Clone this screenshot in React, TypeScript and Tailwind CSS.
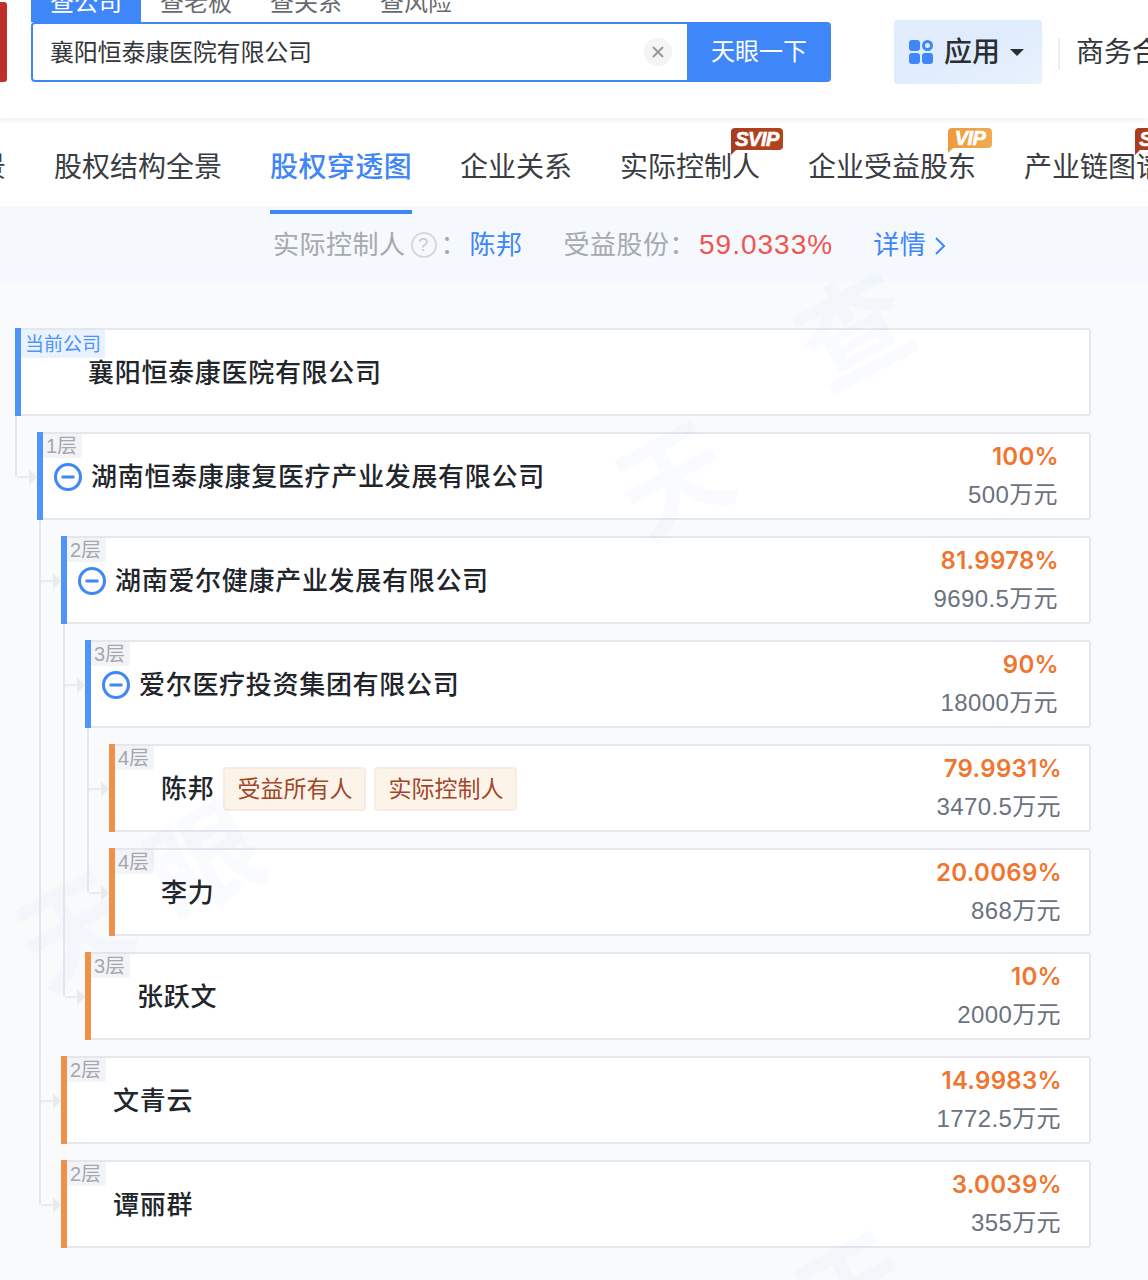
const tabs = [
  { label: '企业图景' },
  { label: '股权结构全景' },
  { label: '股权穿透图', active: true },
  { label: '企业关系' },
  { label: '实际控制人', badge: 'SVIP' },
  { label: '企业受益股东', badge: 'VIP' },
  { label: '产业链图谱', badge: 'SVIP' },
];

const rows = [
  { tag: '1层', name: '湖南恒泰康康复医疗产业发展有限公司', percent: '100%', amount: '500万元', ml: 'ml-[22px]', company: true, pr: 'pr-[31px]' },
  { tag: '2层', name: '湖南爱尔健康产业发展有限公司', percent: '81.9978%', amount: '9690.5万元', ml: 'ml-[46px]', company: true, pr: 'pr-[31px]' },
  { tag: '3层', name: '爱尔医疗投资集团有限公司', percent: '90%', amount: '18000万元', ml: 'ml-[70px]', company: true, pr: 'pr-[31px]' },
  { tag: '4层', name: '陈邦', percent: '79.9931%', amount: '3470.5万元', ml: 'ml-[94px]', owner: true },
  { tag: '4层', name: '李力', percent: '20.0069%', amount: '868万元', ml: 'ml-[94px]' },
  { tag: '3层', name: '张跃文', percent: '10%', amount: '2000万元', ml: 'ml-[70px]' },
  { tag: '2层', name: '文青云', percent: '14.9983%', amount: '1772.5万元', ml: 'ml-[46px]' },
  { tag: '2层', name: '谭丽群', percent: '3.0039%', amount: '355万元', ml: 'ml-[46px]' },
];

function MinusIcon() {
  return (
    <svg width="28" height="28" viewBox="0 0 28 28" className="shrink-0" fill="none" stroke="#3f86f8">
      <circle cx="14" cy="14" r="12.5" strokeWidth="3" />
      <path d="M7.5 14h13" strokeWidth="3" />
    </svg>
  );
}

function Tag({ children }: { children: string }) {
  return (
    <span className="h-[44px] px-[12px] flex items-center rounded-[4px] border-2 border-[#f9ecdf] bg-[#fdf4e9] text-[#a2462a] text-[23px]">
      {children}
    </span>
  );
}

function Badge({ type }: { type: string }) {
  const svip = type === 'SVIP';
  return (
    <span
      className={`absolute top-[-20px] flex items-center justify-center rounded-[4px] rounded-bl-none italic font-bold text-white text-[20px] leading-none tracking-[-0.5px] [-webkit-text-stroke:0.6px_white] ${
        svip
          ? 'left-[111px] w-[52px] h-[22px] bg-gradient-to-r from-[#a83c1d] to-[#b3441f]'
          : 'left-[140px] w-[44px] h-[20px] bg-gradient-to-r from-[#ee9a3c] to-[#f0ab55]'
      }`}
    >
      {type}
      <span
        className={`absolute left-0 top-full border-t-[5px] border-r-[5px] border-r-transparent ${
          svip ? 'border-t-[#a83c1d]' : 'border-t-[#ee9a3c]'
        }`}
      />
    </span>
  );
}

function TreeRow({ row }: { row: (typeof rows)[number] }) {
  const accent = row.company ? 'bg-[#4f94fb]' : 'bg-[#f0914a]';
  return (
    <div className={`relative h-[88px] flex items-center bg-white border-2 border-l-0 border-[#e4e7ee] rounded-r-[3px] ${row.ml} ${row.pr ?? 'pr-[28px]'}`}>
      {/* connector */}
      <div className="absolute left-[-20px] top-[42px] w-[12px] h-[2px] bg-[#e9ebf0]" />
      <div className="absolute left-[-8px] top-[35px] border-y-[8px] border-y-transparent border-l-[8px] border-l-[#e9ebf0]" />
      <div className={`w-[6px] h-[88px] shrink-0 ${accent}`} />
      <span className="absolute left-[6px] top-0 h-[24px] pl-[3px] pr-[5px] flex items-center bg-[#f3f4f6] rounded-br-[3px] text-[20px] text-[#a3a7af]">
        {row.tag}
      </span>
      <div className={`flex-1 flex items-center text-[26px] font-medium text-[#22252a] tracking-[0.7px] pt-[2px] ${row.company ? 'pl-[11px] gap-[9px]' : 'pl-[46px] gap-[9px]'}`}>
        {row.company && <MinusIcon />}
        <span>{row.name}</span>
        {row.owner && (
          <span className="flex gap-[8px] font-normal tracking-normal">
            <Tag>受益所有人</Tag>
            <Tag>实际控制人</Tag>
          </span>
        )}
      </div>
      <div className="flex flex-col items-end">
        <span className="h-[38px] text-[24px] leading-[38px] font-semibold text-[#f0752f] font-[Inter] tracking-[0.3px] mr-[-1px]">{row.percent}</span>
        <span className="h-[38px] text-[24px] leading-[38px] text-[#6b7280] tracking-[0.4px]">{row.amount}</span>
      </div>
    </div>
  );
}

export default function App() {
  return (
    <div className="relative w-[1148px] h-[1280px] overflow-hidden bg-[#f9fafc] font-['Liberation_Sans','Noto_Sans_CJK_SC',sans-serif]">
      {/* Top bar */}
      <header className="relative z-10 h-[118px] bg-white flex items-start shadow-[0_2px_6px_rgba(0,0,0,0.07)] overflow-hidden">
        <div className="w-[7px] shrink-0 h-[80px] mt-[2px] bg-[#c0302b] rounded-r-[3px]" />
        <div className="ml-[24px] w-[800px] shrink-0">
          <div className="h-[22px] flex items-end overflow-hidden text-[24px] text-[#666a70]">
            <span className="shrink-0 h-[38px] w-[110px] flex items-center justify-center bg-[#3f86f8] text-white rounded-t-[3px]">查公司</span>
            <span className="shrink-0 h-[38px] leading-[38px] ml-[19px]">查老板</span>
            <span className="shrink-0 h-[38px] leading-[38px] ml-[38px]">查关系</span>
            <span className="shrink-0 h-[38px] leading-[38px] ml-[38px]">查风险</span>
          </div>
          <div className="h-[60px] flex border-2 border-[#3f86f8] rounded-[4px]">
            <div className="flex-1 flex items-center justify-between pl-[17px] pr-[15px] text-[24px] text-[#33363b]">
              <span className="pt-[2px] tracking-[-0.2px]">襄阳恒泰康医院有限公司</span>
              <span className="w-[28px] h-[28px] rounded-full bg-[#f4f4f4] flex items-center justify-center">
                <svg width="14" height="14" viewBox="0 0 14 14" stroke="#999" strokeWidth="2">
                  <path d="M2 2l10 10M12 2L2 12" />
                </svg>
              </span>
            </div>
            <div className="w-[142px] pl-[2px] bg-[#3f86f8] flex items-center justify-center text-white text-[24px]">天眼一下</div>
          </div>
        </div>
        <div className="ml-[63px] mt-[20px] w-[148px] h-[64px] shrink-0 rounded-[4px] bg-gradient-to-br from-[#e1edfd] via-[#e0ecfd] to-[#e9f1fc] flex items-center pl-[15px]">
          <svg width="24" height="24" viewBox="0 0 24 24" fill="#3f86f8">
            <rect x="0" y="0" width="11" height="11" rx="3" />
            <circle cx="18.5" cy="5.5" r="4" fill="none" stroke="#3f86f8" strokeWidth="3" />
            <rect x="0" y="13" width="11" height="11" rx="3" />
            <rect x="13" y="13" width="11" height="11" rx="3" />
          </svg>
          <span className="ml-[11px] text-[28px] font-medium text-[#2b2e33] pt-[2px]">应用</span>
          <span className="ml-[10px] border-x-[7px] border-x-transparent border-t-[7px] border-t-[#2b2e33]" />
        </div>
        <div className="ml-[16px] mt-[38px] w-[2px] h-[32px] shrink-0 bg-[#eceef2]" />
        <span className="ml-[16px] mt-[31px] shrink-0 text-[28px] leading-[44px] text-[#33363b] whitespace-nowrap">商务合作</span>
      </header>

      {/* Tabs */}
      <nav className="relative z-0 h-[88px] pt-[12px] bg-white flex items-center gap-[48px] ml-[-106px] w-[1300px]">
        {tabs.map((tab) => (
          <div
            key={tab.label}
            className={`relative shrink-0 h-[40px] leading-[40px] text-[28px] ${
              tab.active ? 'text-[#3f86f8] font-medium tracking-[0.4px]' : 'text-[#3a3d42]'
            }`}
          >
            {tab.label}
            {tab.badge && <Badge type={tab.badge} />}
            {tab.active && <div className="absolute left-0 right-0 top-[62px] h-[4px] bg-[#3f86f8]" />}
          </div>
        ))}
      </nav>

      {/* Summary */}
      <div className="h-[76px] pt-[2px] bg-[#f5f8fd] flex items-center pl-[273px] text-[26px] text-[#a5a9b0] tracking-[0.5px] whitespace-nowrap">
        <span>实际控制人</span>
        <span className="ml-[5px] w-[26px] h-[26px] rounded-full border-2 border-[#d5d8dd] flex items-center justify-center text-[18px] text-[#c6c9ce]">?</span>
        <span className="ml-[4px] w-[28px]">：</span>
        <span className="ml-[1px] text-[#3f86f8]">陈邦</span>
        <span className="ml-[41px]">受益股份：</span>
        <span className="ml-[3px] text-[#f0564e] text-[28px] tracking-[1px]">59.0333%</span>
        <span className="ml-[40px] text-[#3f86f8]">详情</span>
        <svg width="12" height="20" viewBox="0 0 12 20" fill="none" stroke="#3f86f8" strokeWidth="2" className="ml-[8px] mt-[2px]">
          <path d="M2 2l8 8-8 8" />
        </svg>
      </div>

      {/* Tree */}
      <div className="relative pt-[46px] pl-[15px] pr-[57px] flex flex-col gap-[16px]">
        <div className="absolute left-[15px] top-[134px] w-[2px] h-[60px] bg-[#e4e7ee]" />
        <div className="absolute left-[39px] top-[238px] w-[2px] h-[684px] bg-[#e4e7ee]" />
        <div className="absolute left-[63px] top-[342px] w-[2px] h-[372px] bg-[#e4e7ee]" />
        <div className="absolute left-[87px] top-[446px] w-[2px] h-[164px] bg-[#e4e7ee]" />

        <div className="relative h-[88px] flex items-center bg-white border-2 border-l-0 border-[#e4e7ee] rounded-r-[3px]">
          <div className="w-[6px] h-[88px] shrink-0 bg-[#4f94fb]" />
          <span className="absolute left-[6px] top-0 h-[28px] px-[4px] pt-[3px] flex items-center bg-[#e9f2fe] text-[19px] text-[#4f94fb]">当前公司</span>
          <span className="pl-[67px] text-[26px] font-medium text-[#22252a] tracking-[0.7px] pt-[2px]">襄阳恒泰康医院有限公司</span>
        </div>

        {rows.map((row) => (
          <TreeRow key={row.name} row={row} />
        ))}
      </div>

      {/* Watermark */}
      <div className="absolute inset-0 z-30 overflow-hidden pointer-events-none text-[#3f86f8] font-bold opacity-[0.025] select-none">
        <span className="absolute left-[20px] top-[850px] text-[110px] rotate-[-28deg]">天</span>
        <span className="absolute left-[150px] top-[780px] text-[110px] rotate-[-28deg]">眼</span>
        <span className="absolute left-[620px] top-[400px] text-[110px] rotate-[-28deg]">天</span>
        <span className="absolute left-[800px] top-[250px] text-[110px] rotate-[-28deg]">查</span>
        <span className="absolute left-[800px] top-[1210px] text-[110px] rotate-[-28deg]">天</span>
      </div>
    </div>
  );
}
